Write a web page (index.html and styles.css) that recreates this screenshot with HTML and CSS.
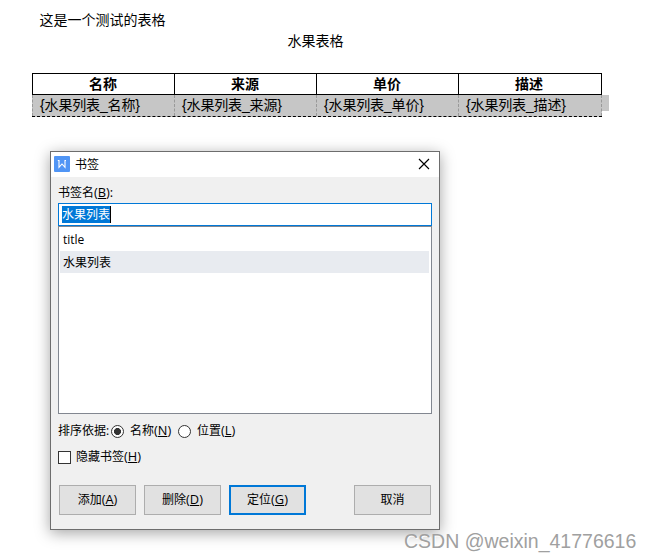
FILE: index.html
```html
<!DOCTYPE html>
<html lang="zh-CN">
<head>
<meta charset="utf-8">
<title>书签</title>
<link rel="stylesheet" href="styles.css">
</head>
<body>
<main class="document">
  <p class="intro">这是一个测试的表格</p>
  <p class="caption">水果表格</p>
  <div class="fruit-table">
    <div class="row head"><div>名称</div><div>来源</div><div>单价</div><div>描述</div></div>
    <div class="row fields"><div>{水果列表_名称}</div><div>{水果列表_来源}</div><div>{水果列表_单价}</div><div>{水果列表_描述}</div></div>
    <span class="row-end"></span>
  </div>
</main>
<section class="dialog">
  <header class="titlebar">
    <svg class="app-icon" width="16" height="16" viewBox="0 0 16 16"><rect width="16" height="16" rx="1" fill="#5095f5"/><path d="M3.8 4.5H5v6.8L8 8l3 3.3V4.5h1" fill="none" stroke="#fff" stroke-width="1.1"/></svg>
    <span class="title">书签</span>
    <svg class="close" width="10" height="10" viewBox="0 0 10 10"><path d="M0 0l10 10M10 0L0 10" stroke="#000" stroke-width="1.15"/></svg>
  </header>
  <div class="content">
    <label class="name-label">书签名<span class="key">(<u>B</u>):</span></label>
    <div class="name-input"><span class="selected">水果列表</span></div>
    <div class="list">
      <div class="item">title</div>
      <div class="item active">水果列表</div>
    </div>
    <div class="sort">
      <span class="sort-label">排序依据:</span>
      <span class="radio checked"></span><span class="name-option">名称<span class="key">(<u>N</u>)</span></span>
      <span class="radio"></span><span class="place-option">位置<span class="key">(<u>L</u>)</span></span>
    </div>
    <div class="hidden-option"><span class="checkbox"></span><span>隐藏书签<span class="key">(<u>H</u>)</span></span></div>
    <div class="buttons">
      <div class="button"><span>添加<span class="key">(<u>A</u>)</span></span></div>
      <div class="button"><span>删除<span class="key">(<u>D</u>)</span></span></div>
      <div class="button primary"><span>定位<span class="key">(<u>G</u>)</span></span></div>
      <div class="button cancel"><span>取消</span></div>
    </div>
  </div>
</section>
<div class="watermark">CSDN @weixin_41776616</div>
</body>
</html>
```
FILE: styles.css
```css
* { box-sizing: border-box; }
body {
  margin: 0;
  width: 651px;
  height: 560px;
  overflow: hidden;
  position: relative;
  background: #fff;
  color: #000;
  font: 12px/16px "Open Sans", "Noto Sans CJK SC", sans-serif;
  white-space: nowrap;
}
p { margin: 0; }
.document {
  height: 151px;
  padding: 10px 0 0 32px;
  font: 14px/20px "Liberation Sans", "Noto Sans CJK SC", sans-serif;
}
.intro { padding-left: 7.5px; height: 21px; }
.caption { padding-left: 255.5px; height: 42px; }
.fruit-table { position: relative; width: 570px; border-top: 1px solid #000; }
.row { display: grid; grid-template-columns: 142px 142px 142px 144px; }
.head {
  height: 21px;
  border-bottom: 1px solid #000;
  font-weight: 700;
  text-align: center;
}
.head div { border-left: 1px solid #000; padding-right: 1px; }
.head div:last-child { border-right: 1px solid #000; padding-right: 2px; }
.fields {
  height: 22px;
  background: #c6c6c6;
  border-bottom: 1px dashed #000;
  letter-spacing: -0.15px;
}
.fields div { padding-left: 7px; border-left: 1px dashed #999; }
.fields div:last-child { border-right: 1px dashed #999; }
.row-end {
  position: absolute;
  left: 570px;
  top: 21px;
  width: 7px;
  height: 16px;
  background: #c6c6c6;
}
.dialog {
  width: 390px;
  height: 379px;
  margin-left: 50px;
  border: 1px solid #6d6d6d;
  background: #f0f0f0;
  box-shadow: 0 3px 14px rgba(0, 0, 0, .36);
}
.titlebar {
  height: 25px;
  display: flex;
  align-items: flex-start;
  padding: 4px 10px 0 3px;
  background: #fff;
}
.title { margin-left: 5px; padding-top: 1px; }
.close { margin: 3px 0 0 auto; overflow: visible; }
.content { padding: 8px 7px 0; }
.name-label { display: block; height: 18px; }
.key { font-size: 12.8px; line-height: 1; }
u { text-underline-offset: 1px; text-decoration-thickness: 1px; text-decoration-skip-ink: none; }
.name-input {
  height: 23px;
  border: 1px solid #0078d7;
  background: #fff;
  padding: 2px 3px;
}
.selected {
  display: inline-block;
  height: 17px;
  line-height: 17px;
  background: #0078d7;
  color: #fff;
  border-right: 1px solid #000;
}
.list {
  height: 188px;
  padding: 2px 2px 0 1px;
  border: 1px solid #828790;
  background: #fff;
}
.item { height: 22px; line-height: 22px; padding-left: 3px; }
.item.active { background: #e8ebf0; line-height: 24px; }
.sort { display: flex; align-items: center; height: 16px; margin-top: 9px; }
.sort-label { width: 53px; }
.radio {
  width: 13px;
  height: 13px;
  border: 1px solid #333;
  border-radius: 50%;
  background: #fff;
}
.radio.checked { background: radial-gradient(circle, #333 0 3.2px, #fff 3.8px); }
.name-option { width: 54px; padding-left: 6px; }
.place-option { padding-left: 6px; }
.hidden-option { display: flex; align-items: center; height: 16px; margin-top: 10px; gap: 5px; }
.checkbox { width: 13px; height: 13px; border: 1px solid #333; background: #fff; }
.buttons { display: flex; gap: 8px; margin: 20px 1px 0; }
.button {
  width: 77px;
  height: 30px;
  display: flex;
  align-items: center;
  justify-content: center;
  border: 1px solid #adadad;
  background: #e1e1e1;
}
.primary { border: 2px solid #0078d7; }
.cancel { margin-left: auto; }
.watermark {
  position: absolute;
  left: 404px;
  top: 529px;
  font: 19.5px/24px "Liberation Sans", sans-serif;
  color: #a0a0a0;
  text-shadow: 1px 1px 0 #fff;
}
```
